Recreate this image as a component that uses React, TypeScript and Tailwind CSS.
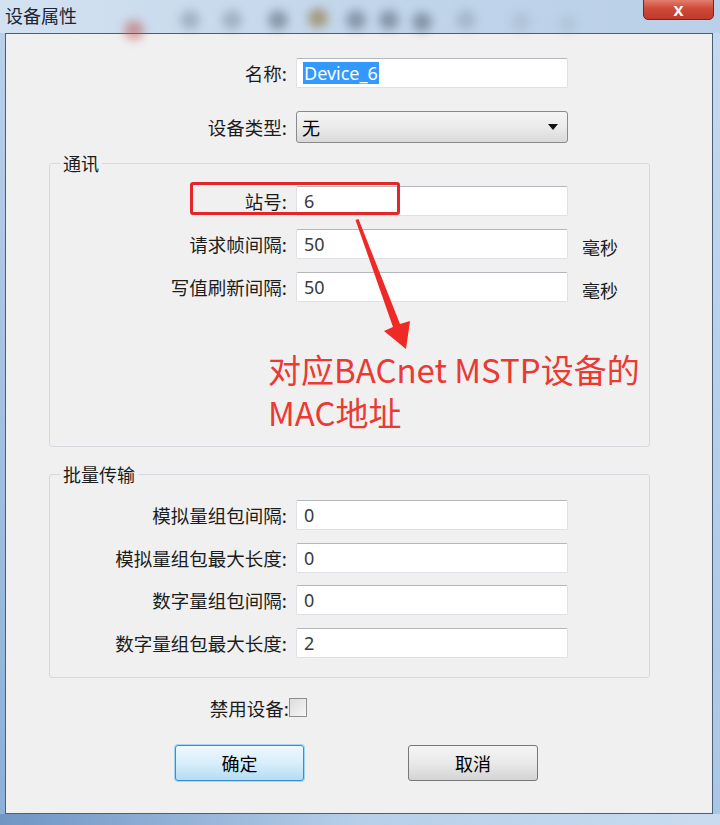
const cjk = { fontFamily: '"Noto Sans CJK SC", "Noto Sans", sans-serif' }
const latin = { fontFamily: '"Noto Sans", "Noto Sans CJK SC", sans-serif' }

const blobs = [
  { x: 124, c: 'bg-[#c0504d]', o: 'opacity-50', y: 20 },
  { x: 180, c: 'bg-[#5a6b7c]', o: 'opacity-35', y: 10 },
  { x: 222, c: 'bg-[#5a6b7c]', o: 'opacity-35', y: 10 },
  { x: 268, c: 'bg-[#3f4d5c]', o: 'opacity-45', y: 10 },
  { x: 308, c: 'bg-[#8a6a2a]', o: 'opacity-55', y: 8 },
  { x: 346, c: 'bg-[#3f4d5c]', o: 'opacity-45', y: 10 },
  { x: 379, c: 'bg-[#3f4d5c]', o: 'opacity-45', y: 10 },
  { x: 412, c: 'bg-[#3f4d5c]', o: 'opacity-45', y: 12 },
  { x: 456, c: 'bg-[#6b7a8a]', o: 'opacity-30', y: 10 },
  { x: 511, c: 'bg-[#8a98a6]', o: 'opacity-25', y: 12 },
  { x: 558, c: 'bg-[#8a98a6]', o: 'opacity-20', y: 14 }
]

function TextBox({ value, selected }: { value: string; selected?: boolean }) {
  return (
    <div className="ml-[9px] flex h-[30px] w-[272px] items-center rounded-[2px] border border-[#dde1e6] border-t-[#b4b7bb] bg-white pl-[6px]">
      <span
        style={latin}
        className={selected ? 'bg-[#3399ff] px-[1px] text-[18px] leading-[22px] text-white' : 'pl-[1px] text-[18px] leading-[22px] text-[#3a3a3a]'}
      >
        {value}
      </span>
    </div>
  )
}

function Row({ label, value, labelW, unit, className = '' }: { label: string; value: string; labelW: string; unit?: string; className?: string }) {
  return (
    <div className={`flex items-center ${className}`}>
      <div style={cjk} className={`${labelW} text-right text-[18.5px] leading-[26px] text-[#1c1c1c]`}>{label}</div>
      <TextBox value={value} />
      {unit && <span style={cjk} className="ml-[14px] translate-y-[3px] text-[18px] leading-[24px] text-[#1c1c1c]">{unit}</span>}
    </div>
  )
}

export default function App() {
  return (
    <div className="relative flex h-[825px] w-[720px] flex-col overflow-hidden bg-gradient-to-b from-[#c9dbee] to-[#a9c5e4]">
      {/* title bar */}
      <div className="relative h-[33px] shrink-0 bg-gradient-to-r from-[#d3e2f1] via-[#c2d5ea] to-[#b9d0e8]">
        {blobs.map((b) => (
          <span
            key={b.x}
            className={`absolute h-[20px] w-[20px] rounded-full blur-[5px] ${b.c} ${b.o}`}
            style={{ left: b.x, top: b.y }}
          />
        ))}
        <div style={cjk} className="relative pl-[5px] pt-[2px] text-[18px] leading-[26px] text-[#1b2533]">设备属性</div>
        <div className="absolute left-[643px] top-[-4px] flex h-[24px] w-[71px] items-center justify-center rounded-b-[5px] border border-[#6a2a22] bg-gradient-to-b from-[#e7907f] via-[#cf4b3a] to-[#c0392b]">
          <span style={latin} className="mt-[4px] text-[15px] font-bold leading-none text-white">X</span>
        </div>
      </div>

      <div className="flex">
        <div className="w-[5px] bg-gradient-to-b from-[#b9d0ea] to-[#8db0d8]" />
        {/* client area */}
        <div className="flex h-[781px] w-[708px] flex-col border border-[#4e5e72] bg-[#f0f0f0] pt-[24px]">
          <div className="flex items-center">
            <div style={cjk} className="w-[281px] text-right text-[18.5px] leading-[26px] text-[#1c1c1c]">名称:</div>
            <TextBox value="Device_6" selected />
          </div>

          <div className="mt-[23px] flex items-center">
            <div style={cjk} className="w-[281px] text-right text-[18.5px] leading-[26px] text-[#1c1c1c]">设备类型:</div>
            <div className="ml-[9px] flex h-[32px] w-[272px] items-center justify-between rounded-[3px] border border-[#8a8a8a] bg-gradient-to-b from-[#f4f4f4] via-[#ebebeb] to-[#d9d9d9] pl-[5px] pr-[9px]">
              <span style={cjk} className="text-[18px] text-black">无</span>
              <svg width="10" height="6" viewBox="0 0 10 6"><path d="M0 0h10L5 6z" fill="#111" /></svg>
            </div>
          </div>

          {/* 通讯 */}
          <fieldset className="ml-[43px] mt-[10px] h-[294px] w-[601px] rounded-[3px] border border-[#d6dadf]">
            <legend style={cjk} className="ml-[10px] px-[3px] text-[18px] leading-[20px] text-[#1c1c1c]">通讯</legend>
            <Row label="站号:" value="6" labelW="w-[237px]" className="mt-[13px]" />
            <Row label="请求帧间隔:" value="50" labelW="w-[237px]" unit="毫秒" className="mt-[13px]" />
            <Row label="写值刷新间隔:" value="50" labelW="w-[237px]" unit="毫秒" className="mt-[13px]" />
            <p style={cjk} className="ml-[218px] mt-[46px] text-[33px] leading-[43px] text-[#ea3a33]">
              对应BACnet MSTP设备的
              <br />
              MAC地址
            </p>
          </fieldset>

          {/* 批量传输 */}
          <fieldset className="ml-[43px] mt-[17px] h-[214px] w-[601px] rounded-[3px] border border-[#d6dadf]">
            <legend style={cjk} className="ml-[10px] px-[3px] text-[18px] leading-[20px] text-[#1c1c1c]">批量传输</legend>
            <Row label="模拟量组包间隔:" value="0" labelW="w-[237px]" className="mt-[16px]" />
            <Row label="模拟量组包最大长度:" value="0" labelW="w-[237px]" className="mt-[13px]" />
            <Row label="数字量组包间隔:" value="0" labelW="w-[237px]" className="mt-[12px]" />
            <Row label="数字量组包最大长度:" value="2" labelW="w-[237px]" className="mt-[13px]" />
          </fieldset>

          <div className="mt-[20px] flex items-center">
            <div style={cjk} className="w-[283px] text-right text-[18.5px] leading-[18px] text-[#1c1c1c]">禁用设备:</div>
            <div className="h-[19px] w-[18px] border border-[#8f8f8f] bg-gradient-to-br from-[#dcdcdc] to-[#f7f7f7]" />
          </div>

          <div className="mt-[28px] flex pl-[169px]">
            <button style={cjk} className="h-[36px] w-[129px] rounded-[3px] border border-[#3d8fc4] bg-gradient-to-b from-[#eef7fd] via-[#d8eefb] to-[#b4dcf4] text-[18px] text-black shadow-[0_0_0_1px_#9fd6f5]">
              确定
            </button>
            <button style={cjk} className="ml-[104px] h-[36px] w-[130px] rounded-[3px] border border-[#777] bg-gradient-to-b from-[#f5f5f5] via-[#e9e9e9] to-[#d4d4d4] text-[18px] text-black">
              取消
            </button>
          </div>
        </div>
        <div className="w-[7px] bg-gradient-to-b from-[#c3d9ef] to-[#a8c6e6]" />
      </div>
      <div className="flex-1 bg-gradient-to-r from-[#6f95c4] via-[#b7cfe9] to-[#c9dcef]" />

      {/* annotation overlay */}
      <div className="absolute left-[190px] top-[182px] h-[33px] w-[210px] rounded-[3px] border-[3px] border-[#e3262a]" />
      <svg className="pointer-events-none absolute left-0 top-0" width="720" height="825">
        <polygon points="355.5,220 358.5,219 400,324 410,321 406,349 384,331 393,327" fill="#ee2a26" />
      </svg>
    </div>
  )
}
